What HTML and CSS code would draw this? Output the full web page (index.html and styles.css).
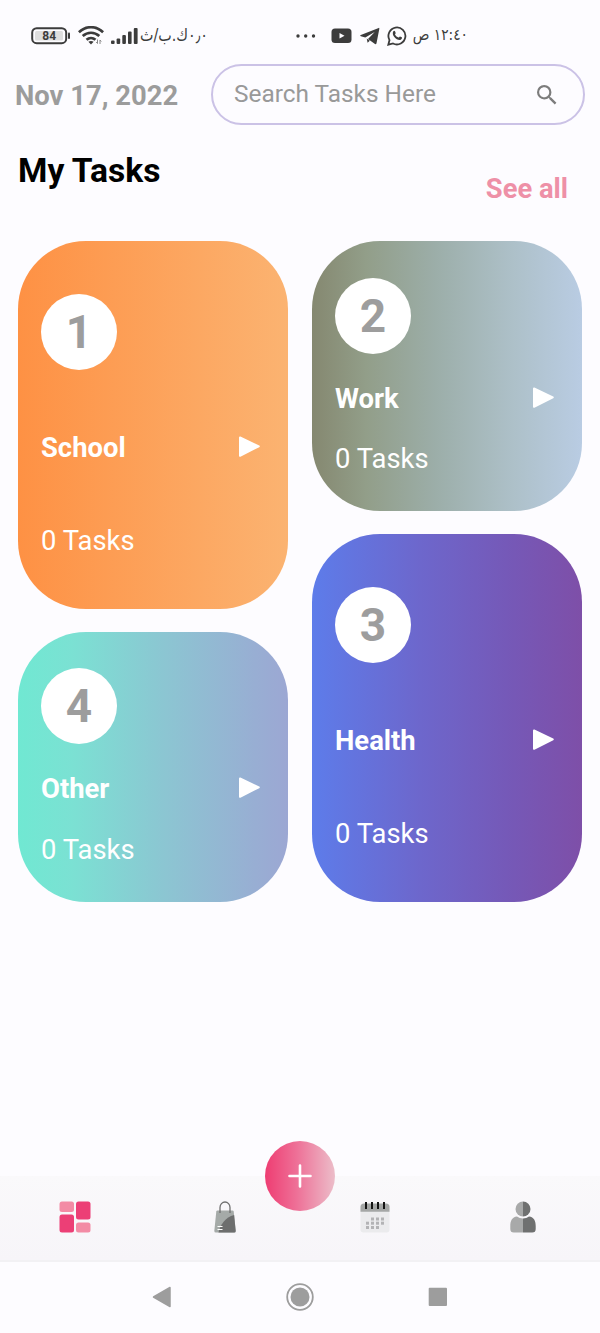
FILE: index.html
```html
<!DOCTYPE html>
<html lang="en">
<head>
<meta charset="utf-8">
<meta name="viewport" content="width=device-width, initial-scale=1">
<title>My Tasks</title>
<link rel="stylesheet" href="styles.css">
</head>
<body>
<div class="screen">
  <div class="status">
    <svg class="battery" width="40" height="18" viewBox="0 0 40 18"><rect x="1.2" y="1.2" width="34" height="15" rx="4.5" fill="#fdfcff" stroke="#3c3c3c" stroke-width="2"/><rect x="4" y="4" width="28" height="9.5" rx="1.5" fill="#dedede"/><path d="M38 6.5v4.500" stroke="#3c3c3c" stroke-width="2" stroke-linecap="round"/><text class="battery-text" x="18.200" y="13.300" text-anchor="middle">84</text></svg>
    <svg class="wifi" width="26" height="19" viewBox="0 0 26 19" fill="none" stroke="#3c3c3c" stroke-width="2.700"><path d="M.9 6.300C8-.500 18-.500 25.100 6.300"/><path d="M4.700 10.100c4.900-4.500 11.700-4.500 16.600 0"/><path d="M8.500 13.800c2.700-2.400 6.300-2.400 9 0"/><path d="M13 18.500l-2.600-2.700q2.600-1.800 5.200 0z" fill="#3c3c3c" stroke="none"/><path d="M19.500 13.500v4m-1.300-1.500 1.300 1.500M22 18v-4m0 0 1.300 1.500" stroke="#888" stroke-width="1"/></svg>
    <svg class="signal" width="28" height="18" viewBox="0 0 28 18" fill="#3c3c3c"><rect x="0" y="13.500" width="3.600" height="3.500" rx="1"/><rect x="5.600" y="11.500" width="3.600" height="5.500" rx="1"/><rect x="11.300" y="8" width="3.600" height="9" rx="1"/><rect x="17" y="4.500" width="3.600" height="12.500" rx="1"/><rect x="22.800" y="1" width="3.800" height="16" rx="1"/></svg>
    <span class="ar speed" dir="rtl" lang="ar">٠٫٠ك.ب/ث</span>
    <svg class="dots" width="22" height="6" viewBox="0 0 22 6" fill="#3c3c3c"><circle cx="3" cy="3" r="1.700"/><circle cx="10.700" cy="3" r="1.700"/><circle cx="18.500" cy="3" r="1.700"/></svg>
    <svg class="youtube" width="21" height="16" viewBox="0 0 21 16"><rect x=".5" y=".5" width="20" height="14.500" rx="3.500" fill="#3c3c3c"/><path d="M8.500 5l5 2.800-5 2.800z" fill="#fdfcff"/></svg>
    <svg class="telegram" width="20" height="18" viewBox="0 0 20 18"><path d="M18.700.9L.8 8c-.8.400-.7.900.1 1.200l4.400 1.400L14.700 5 8 12.100 15 17q1.100.500 1.500-.7L19.300 2Q19.500.500 18.700.9zM6.700 11.500l.9 4.200 2.200-2z" fill="#3c3c3c"/></svg>
    <svg class="whatsapp" width="20" height="20" viewBox="0 0 20 20"><path d="M1.300 18.700l1.200-4.600A8.500 8.500 0 1 1 6 17.500z" fill="none" stroke="#3c3c3c" stroke-width="1.800"/><path d="M6.300 5.300c.7-.8 1.400-.7 1.700 0l.7 1.700c.1.700-.8 1-.7 1.500.8 1.600 2 2.500 3.500 3.100.5 0 .8-1.100 1.500-1.200l1.800.9c.8.700-.5 2.600-2 2.800-3.400.2-8.700-5.100-6.500-8.800z" fill="#3c3c3c"/></svg>
    <span class="ar time" dir="rtl" lang="ar">١٢:٤٠ ص</span>
  </div>

  <header class="header">
    <div class="date">Nov 17, 2022</div>
    <div class="search"><span>Search Tasks Here</span><svg width="20" height="20" viewBox="3 3 18 18"><path fill="#7c7c7c" d="M15.500 14h-.79l-.28-.27A6.470 6.470 0 0 0 16 9.500 6.500 6.500 0 1 0 9.500 16c1.610 0 3.090-.59 4.230-1.570l.27.28v.79l5 4.990L20.490 19zm-6 0C7.010 14 5 11.990 5 9.500S7.010 5 9.500 5 14 7.010 14 9.500 11.990 14 9.500 14z"/></svg></div>
  </header>

  <div class="heading"><h1>My Tasks</h1><a class="see-all">See all</a></div>

  <main class="board">
    <div class="column">
      <section class="card tall school"><div class="badge">1</div><div class="row"><h2>School</h2><svg class="arrow" width="23" height="22" viewBox="0 0 23 22"><path d="M2 1.500l18.800 8.800-18.800 9.500z"/></svg></div><p>0 Tasks</p></section>
      <section class="card short other"><div class="badge">4</div><div class="row"><h2>Other</h2><svg class="arrow" width="23" height="22" viewBox="0 0 23 22"><path d="M2 1.500l18.800 8.800-18.800 9.500z"/></svg></div><p>0 Tasks</p></section>
    </div>
    <div class="column">
      <section class="card short work"><div class="badge">2</div><div class="row"><h2>Work</h2><svg class="arrow" width="23" height="22" viewBox="0 0 23 22"><path d="M2 1.500l18.800 8.800-18.800 9.500z"/></svg></div><p>0 Tasks</p></section>
      <section class="card tall health"><div class="badge">3</div><div class="row"><h2>Health</h2><svg class="arrow" width="23" height="22" viewBox="0 0 23 22"><path d="M2 1.500l18.800 8.800-18.800 9.500z"/></svg></div><p>0 Tasks</p></section>
    </div>
  </main>

  <nav class="tabs">
    <div class="tab"><svg width="32" height="32" viewBox="0 0 32 32"><rect x=".5" y=".5" width="14.500" height="10.500" rx="2.500" fill="#f38ba5"/><rect x="17" y=".5" width="14.500" height="18" rx="2.500" fill="#ec3f76"/><rect x=".5" y="13.500" width="14.500" height="18" rx="2.500" fill="#ec3f76"/><rect x="17" y="21.500" width="14.500" height="10" rx="2.500" fill="#f38ba5"/></svg></div>
    <div class="tab"><svg width="22" height="32" viewBox="0 0 22 32"><path d="M3.500 9.500h15q1 0 1.200 1L21.700 30q0 1.500-1.500 1.500H1.800Q.300 31.500.3 30L2.300 10.500q.2-1 1.200-1z" fill="#a5aaa8"/><path d="M20.100 14L21.700 30q0 1.500-1.500 1.500H4.500C6 24 11.500 16 20.100 14z" fill="#6d6e6e"/><path d="M6 12V6.500a5 5.500 0 0 1 10 0V12" fill="none" stroke="#707070" stroke-width="1.300"/><path d="M3.500 25.500h5M3.500 28.500h5" stroke="#fff" stroke-width="1.200"/></svg></div>
    <div class="tab"><svg width="30" height="32" viewBox="0 0 30 32"><rect x=".5" y="3" width="29" height="28.500" rx="3" fill="#ebebed"/><path d="M.5 10.800V6q0-3.500 3.500-3.500h22q3.500 0 3.500 3.500v4.800z" fill="#a5a7a6"/><path d="M6 1v7M12 1v7M18 1v7M24 1v7" stroke="#141414" stroke-width="2"/><g fill="#b3b3b5"><rect x="11" y="16.500" width="3" height="3"/><rect x="16" y="16.500" width="3" height="3"/><rect x="21" y="16.500" width="3" height="3"/><rect x="6" y="20.700" width="3" height="3"/><rect x="11" y="20.700" width="3" height="3"/><rect x="16" y="20.700" width="3" height="3"/><rect x="21" y="20.700" width="3" height="3"/><rect x="6" y="25" width="3" height="3"/><rect x="11" y="25" width="3" height="3"/><rect x="16" y="25" width="3" height="3"/></g></svg></div>
    <div class="tab profile"><svg width="26" height="32" viewBox="0 0 26 32"><path d="M13 .5a7.500 7.500 0 0 0 0 15z" fill="#a8a9a9"/><path d="M13 .5a7.500 7.500 0 0 1 0 15z" fill="#6f7070"/><path d="M13 17.500q-3.500 0-6-2C2 16 .3 20 .3 25v3q0 3.500 3.500 3.500H13z" fill="#a8a9a9"/><path d="M13 17.500q3.500 0 6-2c5 .5 6.700 4.500 6.700 9.500v3q0 3.500-3.500 3.500H13z" fill="#6f7070"/></svg></div>
    <div class="fab"><svg width="24" height="24" viewBox="0 0 24 24"><path d="M12 1.500v21M1.500 12h21" stroke="#fff" stroke-width="2.600" stroke-linecap="round"/></svg></div>
  </nav>

  <div class="system">
    <svg width="28" height="28" viewBox="0 0 28 28"><path d="M22 4.500v19L5.500 14z" fill="#9d9d9d" stroke="#9d9d9d" stroke-width="1.500" stroke-linejoin="round"/></svg>
    <svg width="28" height="28" viewBox="0 0 28 28"><circle cx="14" cy="14" r="12.800" fill="none" stroke="#9d9d9d" stroke-width="1.800"/><circle cx="14" cy="14" r="9.500" fill="#9d9d9d"/></svg>
    <svg width="28" height="28" viewBox="0 0 28 28"><rect x="4.700" y="4.700" width="18.300" height="18.300" rx="1" fill="#9d9d9d"/></svg>
  </div>
</div>
</body>
</html>
```
FILE: styles.css
```css
* { box-sizing: border-box; }
body { margin: 0; background: #fdfcff; font-family: Roboto, "DejaVu Sans", sans-serif; }
h1, h2, p { margin: 0; }
svg { display: block; flex: none; }

.screen { width: 600px; height: 1333px; display: flex; flex-direction: column; overflow: hidden; }

.status { height: 64px; padding: 8px 0 0 31px; display: flex; align-items: flex-start; }
.status svg { margin-top: 19px; }
.status .wifi { margin-left: 7px; margin-top: 18px; }
.status .signal { margin-left: 7px; }
.status .dots { margin-left: 87px; margin-top: 25px; }
.status .youtube { margin-left: 14px; margin-top: 20px; }
.status .telegram { margin-left: 8px; }
.status .whatsapp { margin-left: 7px; margin-top: 18px; }
.battery-text { font: 700 12px Roboto, sans-serif; fill: #3c3c3c; }
.ar { font-family: "DejaVu Sans", sans-serif; color: #3c3c3c; white-space: nowrap; line-height: 24px; margin-top: 15px; transform-origin: right center; }
.speed { width: 68px; margin-left: 1px; font-size: 17px; transform: scaleX(.84); }
.time { width: 57px; margin-left: 4px; font-size: 16px; transform: scaleX(.86); }

.header { height: 61px; padding: 0 15px 0 15px; display: flex; align-items: center; justify-content: space-between; }
.date { padding-top: 2px; font-size: 27.4px; font-weight: 700; color: #9c9c9c; white-space: nowrap; }
.search { width: 374px; height: 61px; padding: 0 26px 0 21px; border: 2px solid #cbc2e6; border-radius: 31px; display: flex; align-items: center; justify-content: space-between; font-size: 24.4px; color: #999; }
.search span { padding-bottom: 2px; }

.heading { height: 116px; padding: 26px 32px 0 18px; display: flex; justify-content: space-between; align-items: flex-start; }
.heading h1 { font-size: 33.600px; line-height: 40px; font-weight: 700; color: #000; }
.see-all { margin-top: 22px; font-size: 27.3px; line-height: 33px; font-weight: 700; color: #ee90a7; }

.board { padding: 0 18px; display: flex; justify-content: space-between; }
.column { width: 270px; display: flex; flex-direction: column; gap: 23px; }
.card { padding: 23px; border-radius: 68px; display: flex; flex-direction: column; justify-content: space-around; color: #fff; }
.tall { height: 367.500px; }
.short { height: 270px; }
.school { background: linear-gradient(90deg, #fe9144, #fbb371); }
.work { background: linear-gradient(90deg, #858870, #929e89 20%, #9caea9 46%, #adc0c8 74%, #b9cce3); }
.health { background: linear-gradient(90deg, #5d7cea, #6d67cc 40%, #7559b8 72%, #7e4fa8); }
.other { background: linear-gradient(90deg, #70e8d2, #7be1d3 20%, #8cc5d2 55%, #98aed3 88%, #9ca7d3); }
.badge { width: 76px; height: 76px; border-radius: 50%; background: #fff; color: #9d9d9d; font-size: 46px; font-weight: 700; display: flex; align-items: center; justify-content: center; }
.row { height: 34px; display: flex; align-items: center; justify-content: space-between; padding-right: 4px; }
.row h2 { padding-top: 2px; font-size: 27.400px; line-height: 34px; font-weight: 700; }
.arrow { fill: #fff; stroke: #fff; stroke-width: 2; stroke-linejoin: round; }
.card p { height: 32px; font-size: 27.400px; line-height: 34px; }

.tabs { position: relative; height: 86px; margin-top: auto; display: grid; grid-template-columns: repeat(4, 1fr); background: linear-gradient(#faf9fb, #f7f5f9); border-bottom: 2px solid #f2f1f4; }
.tab { display: flex; justify-content: center; align-items: center; padding-bottom: 3px; }
.profile { padding-right: 5px; }
.fab { position: absolute; left: 265px; top: -35px; width: 70px; height: 70px; border-radius: 50%; background: linear-gradient(90deg, #ee3d72, #ee7097 45%, #ecbdc9); display: flex; align-items: center; justify-content: center; }
.system { height: 71px; padding: 0 148px 2px; display: flex; align-items: center; justify-content: space-between; }
```
